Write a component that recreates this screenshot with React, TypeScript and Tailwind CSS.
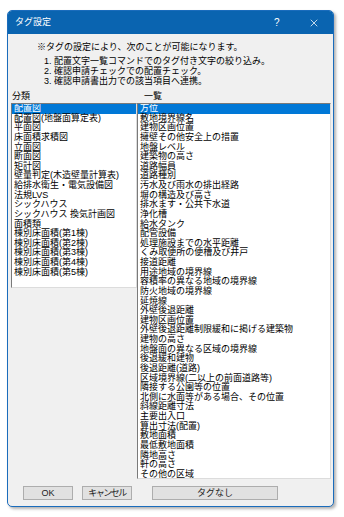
import { X } from "lucide-react";

const categories = [
  "配置図",
  "配置図(地盤面算定表)",
  "平面図",
  "床面積求積図",
  "立面図",
  "断面図",
  "矩計図",
  "壁量判定(木造壁量計算表)",
  "給排水衛生・電気設備図",
  "法規LVS",
  "シックハウス",
  "シックハウス 換気計画図",
  "面積類",
  "棟別床面積(第1棟)",
  "棟別床面積(第2棟)",
  "棟別床面積(第3棟)",
  "棟別床面積(第4棟)",
  "棟別床面積(第5棟)",
];

const items = [
  "方位",
  "敷地境界線名",
  "建物区画位置",
  "擁壁その他安全上の措置",
  "地盤レベル",
  "建築物の高さ",
  "道路幅員",
  "道路種別",
  "汚水及び雨水の排出経路",
  "塀の構造及び高さ",
  "排水ます・公共下水道",
  "浄化槽",
  "給水タンク",
  "配管設備",
  "処理施設までの水平距離",
  "くみ取便所の便槽及び井戸",
  "接道距離",
  "用途地域の境界線",
  "容積率の異なる地域の境界線",
  "防火地域の境界線",
  "延焼線",
  "外壁後退距離",
  "建物区画位置",
  "外壁後退距離制限緩和に掲げる建築物",
  "建物の高さ",
  "地盤面の異なる区域の境界線",
  "後退緩和建物",
  "後退距離(道路)",
  "区域境界線(二以上の前面道路等)",
  "隣接する公園等の位置",
  "北側に水面等がある場合、その位置",
  "斜線距離寸法",
  "主要出入口",
  "算出寸法(配置)",
  "敷地面積",
  "最低敷地面積",
  "隣地高さ",
  "軒の高さ",
  "その他の区域",
];

function ListBox({ rows, className }: { rows: string[]; className: string }) {
  return (
    <div className={`bg-white border border-[#7a7a7a] border-r-[#dcdcdc] border-b-[#dcdcdc] overflow-hidden ${className}`}>
      {rows.map((r, i) => (
        <div
          key={i}
          className={`h-[9.63px] leading-[9.63px] pl-[2px] whitespace-nowrap ${
            i === 0 ? "bg-[#0078d7] text-white" : "text-black"
          }`}
        >
          {r}
        </div>
      ))}
    </div>
  );
}

function Btn({ label, className }: { label: string; className: string }) {
  return (
    <button className={`h-[14px] bg-[#e1e1e1] border border-[#adadad] text-[9px] leading-[12px] text-[#222] ${className}`}>
      {label}
    </button>
  );
}

export default function App() {
  return (
    <div
      className="w-[344px] h-[517px] bg-white pt-[10px] pl-[7px]"
      style={{ fontFamily: '"Liberation Sans", "Noto Sans CJK JP", sans-serif' }}
    >
      <div className="w-[327px] h-[497px] flex flex-col bg-[#f0f0f0] border border-[#1a6cbc] rounded-[5px] overflow-hidden shadow-[2px_2px_3px_rgba(0,0,0,0.3)] text-[9px]">
        <div className="h-[23px] shrink-0 bg-[#0a64b0] flex items-center text-white">
          <span className="pl-[7px] flex-1">タグ設定</span>
          <span className="w-[10px] text-[10px]">?</span>
          <X className="w-[12px] h-[12px] ml-[24px] mr-[13px]" strokeWidth={1.5} />
        </div>

        <div className="pl-[29px] pt-[8px] leading-[10px]">
          <div className="mb-[4px]">※タグの設定により、次のことが可能になります。</div>
          <div className="pl-[7px]">1. 配置文字一覧コマンドでのタグ付き文字の絞り込み。</div>
          <div className="pl-[7px]">2. 確認申請チェックでの配置チェック。</div>
          <div className="pl-[7px]">3. 確認申請書出力での該当項目へ連携。</div>
        </div>

        <div className="flex pl-[4px] mt-[5px] leading-[10px]">
          <div className="w-[132px]">分類</div>
          <div>一覧</div>
        </div>

        <div className="flex pl-[3px] mt-[2px] items-start">
          <ListBox rows={categories} className="w-[126px] h-[185px]" />
          <ListBox rows={items} className="w-[194px] h-[376px]" />
        </div>

        <div className="flex pl-[15px] mt-[7px]">
          <Btn label="OK" className="w-[50px]" />
          <Btn label="キャンセル" className="w-[50px] ml-[9px] tracking-[-1.5px]" />
          <Btn label="タグなし" className="w-[126px] ml-[20px]" />
        </div>
      </div>
    </div>
  );
}
